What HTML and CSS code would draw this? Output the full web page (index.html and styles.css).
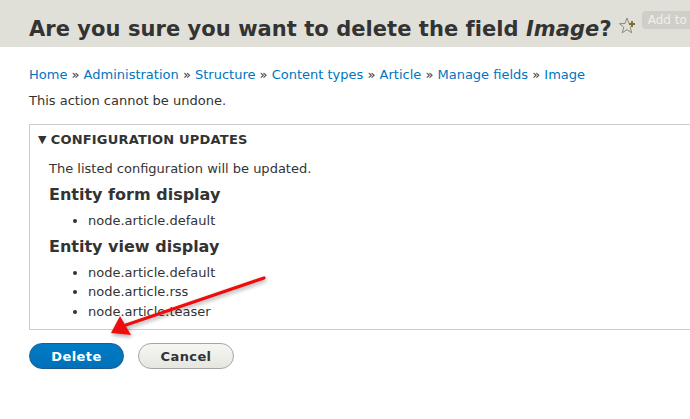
FILE: index.html
```html
<!DOCTYPE html>
<html>
<head>
<meta charset="utf-8">
<link rel="stylesheet" href="styles.css">
</head>
<body>
<header class="page-head">
  <h1 class="title">Are you sure you want to delete the field <em>Image</em>?</h1>
  <span class="shortcut">
    <svg class="star" width="20" height="20" viewBox="0 0 20 20">
      <path d="M9 2 L11 7.5 L16.5 7.7 L12.2 11.2 L13.7 16.8 L9 13.6 L4.3 16.8 L5.8 11.2 L1.5 7.7 L7 7.5 Z" fill="none" stroke="#8a8a80" stroke-width="1"/>
      <path d="M14 5 V11 M11 8 H17" stroke="#7a6e2a" stroke-width="1.8"/>
    </svg>
    <span class="shortcut-label">Add to</span>
  </span>
</header>
<main class="content">
  <nav class="breadcrumb">
    <a href="#">Home</a> » <a href="#">Administration</a> » <a href="#">Structure</a> » <a href="#">Content types</a> » <a href="#">Article</a> » <a href="#">Manage fields</a> » <a href="#">Image</a>
  </nav>
  <p class="warning">This action cannot be undone.</p>
  <fieldset class="details">
    <div class="summary"><span class="caret">▼</span>CONFIGURATION UPDATES</div>
    <div class="details-body">
      <p class="intro">The listed configuration will be updated.</p>
      <h3>Entity form display</h3>
      <ul>
        <li>node.article.default</li>
      </ul>
      <h3>Entity view display</h3>
      <ul>
        <li>node.article.default</li>
        <li>node.article.rss</li>
        <li>node.article.teaser</li>
      </ul>
    </div>
  </fieldset>
  <div class="actions">
    <button class="btn btn-primary">Delete</button>
    <button class="btn">Cancel</button>
  </div>
</main>
<svg class="arrow" width="690" height="419" viewBox="0 0 690 419">
  <defs>
    <filter id="sh" x="-20%" y="-20%" width="140%" height="140%">
      <feGaussianBlur in="SourceAlpha" stdDeviation="2"/>
      <feOffset dx="1" dy="2" result="b"/>
      <feComponentTransfer><feFuncA type="linear" slope="0.35"/></feComponentTransfer>
      <feMerge><feMergeNode/><feMergeNode in="SourceGraphic"/></feMerge>
    </filter>
  </defs>
  <g filter="url(#sh)">
    <line x1="264" y1="278" x2="126" y2="325" stroke="#ee1111" stroke-width="3.2" stroke-linecap="round"/>
    <polygon points="111,333 120,316 131,335" fill="#ee1111"/>
  </g>
</svg>
</body>
</html>
```

FILE: styles.css
```css
html, body {
  margin: 0;
  padding: 0;
}
body {
  font-family: "DejaVu Sans", sans-serif;
  color: #333;
  background: #fff;
  width: 690px;
  height: 419px;
  overflow: hidden;
  position: relative;
}
.page-head {
  background: #e0e0d8;
  height: 47px;
  display: flex;
  align-items: center;
  padding-left: 29px;
  white-space: nowrap;
}
.title {
  font-size: 21px;
  font-weight: bold;
  margin: 0;
  color: #333;
  padding-top: 10px;
  letter-spacing: 0.05px;
}
.title em {
  font-style: italic;
}
.shortcut {
  display: flex;
  align-items: center;
  margin-left: 6px;
  padding-top: 5px;
}
.star {
  display: block;
}
.shortcut-label {
  margin-left: 4px;
  background: #cfcfc8;
  color: #f0f0ea;
  font-size: 12px;
  padding: 2px 6px;
  border-radius: 4px;
  margin-top: -12px;
}
.content {
  padding: 0 29px;
}
.breadcrumb {
  font-size: 13px;
  margin-top: 20px;
  line-height: 16px;
  white-space: nowrap;
  color: #333;
}
.breadcrumb a {
  color: #0074bd;
  text-decoration: none;
}
.warning {
  font-size: 13px;
  margin: 10px 0 0;
  line-height: 16px;
}
.details {
  margin: 15px -40px 0 0;
  padding: 0;
  border: 1px solid #ccc;
  min-width: 0;
  height: 206px;
  box-sizing: border-box;
}
.summary {
  font-size: 13px;
  font-weight: bold;
  padding: 7px 0 0 8px;
  line-height: 16px;
  letter-spacing: 0.2px;
}
.caret {
  font-size: 11px;
  margin-right: 4px;
  position: relative;
  top: -1px;
}
.details-body {
  padding: 12px 0 0 19px;
}
.intro {
  font-size: 13px;
  margin: 0;
  line-height: 16px;
}
.details h3 {
  font-size: 16px;
  font-weight: bold;
  margin: 8px 0 0;
  line-height: 20px;
}
.details ul + h3 {
  margin-top: 6px;
}
.details ul {
  margin: 6px 0 0;
  padding-left: 39px;
  font-size: 13px;
  line-height: 19.5px;
}
.details ul li {
  line-height: 19.5px;
}
.actions {
  display: flex;
  gap: 14px;
  margin-top: 13px;
}
.btn {
  font-family: "DejaVu Sans", sans-serif;
  font-size: 13px;
  font-weight: bold;
  height: 26px;
  width: 96px;
  border-radius: 13px;
  border: 1px solid #a6a6a6;
  background: linear-gradient(#f6f6f3, #e6e6e0);
  color: #333;
  padding: 0;
  letter-spacing: 0.4px;
}
.btn-primary {
  width: 95px;
  border-color: #1e5c90;
  background: linear-gradient(#007bc6, #0071b8);
  color: #fff;
}
.arrow {
  position: absolute;
  left: 0;
  top: 0;
  pointer-events: none;
}
```
